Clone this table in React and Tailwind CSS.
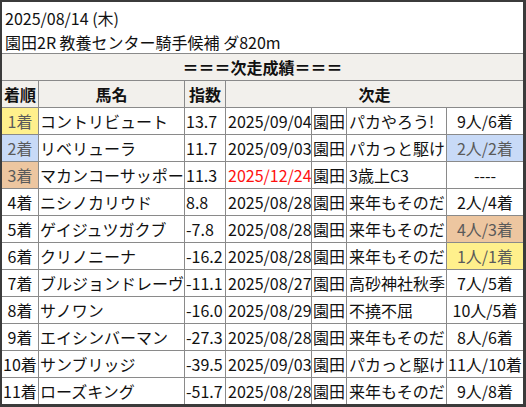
const rows = [
  { pos: "1着", name: "コントリビュート", idx: "13.7", date: "2025/09/04", track: "園田", race: "パカやろう!", res: "9人/6着", posBg: "yellow" },
  { pos: "2着", name: "リベリューラ", idx: "11.7", date: "2025/09/03", track: "園田", race: "パカっと駆け", res: "2人/2着", posBg: "blue", resBg: "blue" },
  { pos: "3着", name: "マカンコーサッポー", idx: "11.3", date: "2025/12/24", red: true, track: "園田", race: "3歳上C3", res: "----", posBg: "peach" },
  { pos: "4着", name: "ニシノカリウド", idx: "8.8", date: "2025/08/28", track: "園田", race: "来年もそのだ", res: "2人/4着" },
  { pos: "5着", name: "ゲイジュツガクブ", idx: "-7.8", date: "2025/08/28", track: "園田", race: "来年もそのだ", res: "4人/3着", resBg: "peach" },
  { pos: "6着", name: "クリノニーナ", idx: "-16.2", date: "2025/08/28", track: "園田", race: "来年もそのだ", res: "1人/1着", resBg: "yellow" },
  { pos: "7着", name: "ブルジョンドレーヴ", idx: "-11.1", date: "2025/08/27", track: "園田", race: "高砂神社秋季", res: "7人/5着" },
  { pos: "8着", name: "サノワン", idx: "-16.0", date: "2025/08/29", track: "園田", race: "不撓不屈", res: "10人/5着" },
  { pos: "9着", name: "エイシンバーマン", idx: "-27.3", date: "2025/08/28", track: "園田", race: "来年もそのだ", res: "8人/6着" },
  { pos: "10着", name: "サンブリッジ", idx: "-39.5", date: "2025/09/03", track: "園田", race: "パカっと駆け", res: "11人/10着" },
  { pos: "11着", name: "ローズキング", idx: "-51.7", date: "2025/08/28", track: "園田", race: "来年もそのだ", res: "9人/8着" },
];

const bgs = {
  yellow: "bg-[#fff08c] text-[#5a5a5a]",
  blue: "bg-[#c8daf7] text-[#5a5a5a]",
  peach: "bg-[#edc6a0] text-[#5a5a5a]",
};

const cell = "overflow-hidden whitespace-nowrap leading-[26px]";

export default function App() {
  return (
    <div className="h-[407px] w-[526px] bg-[#3b3b3b] pl-[2px] pt-[2px]">
      <div
        className="flex h-[402px] w-[521px] flex-col gap-px bg-[#8a8a8a] text-[16px] text-[#111]"
        style={{ fontFamily: '"Noto Sans CJK JP", "Noto Sans", sans-serif' }}
      >
        <div className="h-[51px] bg-white pl-[3px] pt-[4px] leading-[24px]">
          <div>2025/08/14 (木)</div>
          <div>園田2R 教養センター騎手候補 ダ820m</div>
        </div>
        <div className="h-[26px] bg-[#f2f0ec] text-center font-bold leading-[26px]">
          ＝＝＝次走成績＝＝＝
        </div>
        <div className="grid grid-cols-[36px_145px_40px_85px_34px_99px_76px] auto-rows-[26px] gap-px">
          <div className={`${cell} bg-[#f2f0ec] text-center font-bold`}>着順</div>
          <div className={`${cell} bg-[#f2f0ec] text-center font-bold`}>馬名</div>
          <div className={`${cell} bg-[#f2f0ec] text-center font-bold`}>指数</div>
          <div className={`${cell} col-span-4 bg-[#f2f0ec] text-center font-bold`}>次走</div>

          {rows.map((r) => (
            <div key={r.pos} className="contents">
              <div className={`${cell} text-center ${r.posBg ? bgs[r.posBg] : "bg-white"}`}>{r.pos}</div>
              <div className={`${cell} bg-white pl-px`}>{r.name}</div>
              <div className={`${cell} bg-white pl-px`}>{r.idx}</div>
              <div className={`${cell} bg-white pl-[2px] ${r.red ? "text-[#ff1010]" : ""}`}>{r.date}</div>
              <div className={`${cell} bg-white pl-px`}>{r.track}</div>
              <div className={`${cell} bg-white pl-[2px]`}>{r.race}</div>
              <div className={`${cell} text-center ${r.resBg ? bgs[r.resBg] : "bg-white"}`}>{r.res}</div>
            </div>
          ))}
        </div>
      </div>
    </div>
  );
}
